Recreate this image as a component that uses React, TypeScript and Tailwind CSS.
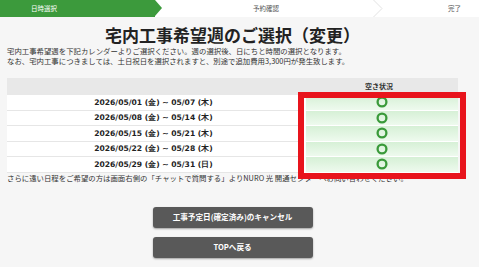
import React from 'react';

const weeks = [
  '2026/05/01 (金) ~ 05/07 (木)',
  '2026/05/08 (金) ~ 05/14 (木)',
  '2026/05/15 (金) ~ 05/21 (木)',
  '2026/05/22 (金) ~ 05/28 (木)',
  '2026/05/29 (金) ~ 05/31 (日)',
];

const Maru = () => (
  <svg width="12" height="12" viewBox="0 0 12 12">
    <circle cx="6" cy="6" r="4.4" fill="none" stroke="#3a9a3a" strokeWidth="2.3" />
  </svg>
);

export default function App() {
  return (
    <div className="relative min-h-[267px] bg-[#f6f6f6] font-['Noto_Sans_CJK_JP',sans-serif] text-[#333]">
      {/* ステップ */}
      <div className="flex h-[17px] bg-white text-[6.5px] text-[#555]">
        <div className="relative flex w-[155px] items-center bg-[#3c9a3c] pl-[31px] text-white">
          日時選択
          <span className="absolute left-full top-0 h-0 w-0 border-y-[8.5px] border-l-[7px] border-y-transparent border-l-[#3c9a3c]" />
        </div>
        <div className="relative flex w-[228px] items-center pl-[98px]">
          予約確認
          <svg className="absolute right-0 top-0" width="10" height="17" viewBox="0 0 10 17">
            <polyline points="0.5,0 9,8.5 0.5,17" fill="none" stroke="#e2e2e2" strokeWidth="1" />
          </svg>
        </div>
        <div className="flex flex-1 items-center pl-[65px]">完了</div>
      </div>

      <div className="ml-[7px] w-[451px]">
        <h1 className="mt-[8px] text-center text-[17px] font-bold leading-[19px] text-[#222]">
          宅内工事希望週のご選択（変更）
        </h1>
        <p className="mt-[2px] text-[7.4px] leading-[10px]">
          宅内工事希望週を下記カレンダーよりご選択ください。週の選択後、日にちと時間の選択となります。
          <br />
          なお、宅内工事につきましては、土日祝日を選択されますと、別途で追加費用3,300円が発生致します。
        </p>

        {/* 週テーブル */}
        <div className="mt-[12px]">
          <div className="flex h-[17px] bg-[#e8e8e8]">
            <div className="flex-1" />
            <div className="flex w-[158px] items-center justify-center text-[7px] font-bold text-[#333]">
              空き状況
            </div>
          </div>
          {weeks.map((w) => (
            <div key={w} className="flex h-[15.5px]">
              <div className="flex flex-1 items-center justify-center border-b border-[#e6e6e6] bg-white font-['DejaVu_Sans',sans-serif] text-[7.6px] font-bold text-[#222]">
                {w}
              </div>
              <div className="flex w-[158px] items-center justify-center border-b border-l-[6px] border-white bg-gradient-to-b from-[#d6f0d6] to-[#eefaee]">
                <Maru />
              </div>
            </div>
          ))}
        </div>

        <p className="text-[7.4px] leading-[10px]">
          さらに遠い日程をご希望の方は画面右側の「チャットで質問する」よりNURO 光 開通センターへお問い合わせください。
        </p>

        <div className="mt-[24px] flex flex-col items-center gap-[9px]">
          <button className="h-[21px] w-[160px] rounded-[3px] bg-[#595959] text-[7.6px] font-bold text-white shadow-[0_1px_2px_rgba(0,0,0,0.35)]">
            工事予定日(確定済み)のキャンセル
          </button>
          <button className="h-[21px] w-[160px] rounded-[3px] bg-[#595959] text-[7.6px] font-bold text-white shadow-[0_1px_2px_rgba(0,0,0,0.35)]">
            TOPへ戻る
          </button>
        </div>
      </div>

      {/* 注釈の赤枠 */}
      <div className="pointer-events-none absolute left-[298px] top-[92px] h-[87px] w-[168px] border-[6px] border-[#e8141c]" />
    </div>
  );
}
